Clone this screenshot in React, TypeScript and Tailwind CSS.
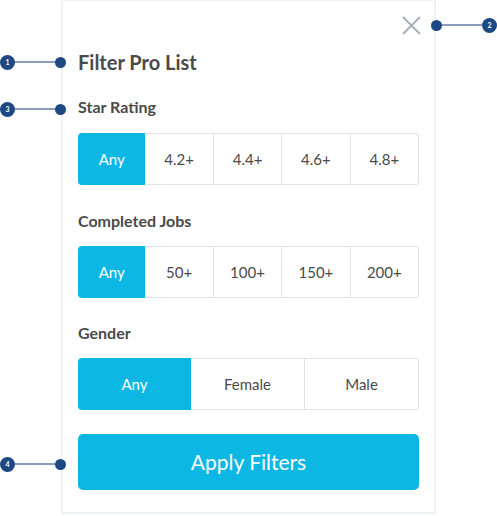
import React from 'react'

const ratings = ['Any', '4.2+', '4.4+', '4.6+', '4.8+']
const jobs = ['Any', '50+', '100+', '150+', '200+']
const genders = ['Any', 'Female', 'Male']

function Segmented({ options }: { options: string[] }) {
  return (
    <div className="flex h-[52px] w-full">
      {options.map((o, i) => (
        <div
          key={o}
          className={`flex flex-1 items-center justify-center text-[15px] ${
            i === 0
              ? 'rounded-l-[4px] bg-[#0cb8e3] text-white'
              : 'border-y border-r border-[#e3e3e3] text-[#4a4a4a]'
          } ${i === options.length - 1 ? 'rounded-r-[3px]' : ''}`}
        >
          {o}
        </div>
      ))}
    </div>
  )
}

function Marker({ n, side, top }: { n: number; side: 'left' | 'right'; top: number }) {
  return (
    <div
      className={`absolute flex h-[14px] w-[66px] items-center ${side === 'left' ? 'left-0' : 'right-0 flex-row-reverse'}`}
      style={{ top: top - 7 }}
    >
      <div className="flex h-[15px] w-[15px] shrink-0 items-center justify-center rounded-full bg-[#1e4883] text-[7px] font-bold text-white">
        {n}
      </div>
      <div className="h-[2px] flex-1 bg-[#8b9dba]" />
      <div className="h-[11px] w-[11px] shrink-0 rounded-full bg-[#1e4883]" />
    </div>
  )
}

export default function App() {
  return (
    <div className="relative h-[516px] w-[497px] bg-white" style={{ fontFamily: 'Lato, "Noto Sans", sans-serif' }}>
      <div className="flex h-full">
        <div className="w-[61px]" />
        <div className="mb-[2px] flex w-[375px] flex-col border-x-2 border-b-2 border-t border-[#eef2f6] px-[15px]">
          <div className="-mr-[2px] flex h-[40px] items-end justify-end">
            <svg width="19" height="19" viewBox="0 0 19 19" className="mb-[6px]">
              <path d="M1 1L18 18M18 1L1 18" stroke="#a7b2bc" strokeWidth="2" />
            </svg>
          </div>
          <h1 className="mt-[9px] text-[20px] font-bold leading-[24px] text-[#4a4a4a]">Filter Pro List</h1>
          <h2 className="mt-[23px] text-[16px] font-bold leading-[20px] text-[#4a4a4a]">Star Rating</h2>
          <div className="mt-[16px]">
            <Segmented options={ratings} />
          </div>
          <h2 className="mt-[26px] text-[16px] font-bold leading-[20px] text-[#4a4a4a]">Completed Jobs</h2>
          <div className="mt-[15px]">
            <Segmented options={jobs} />
          </div>
          <h2 className="mt-[25px] text-[16px] font-bold leading-[20px] text-[#4a4a4a]">Gender</h2>
          <div className="mt-[15px]">
            <Segmented options={genders} />
          </div>
          <button className="mt-[24px] flex h-[56px] w-full items-center justify-center rounded-[5px] bg-[#0cb8e3] text-[21px] text-white">
            Apply Filters
          </button>
        </div>
      </div>
      <Marker n={1} side="left" top={62} />
      <Marker n={3} side="left" top={109} />
      <Marker n={4} side="left" top={464} />
      <Marker n={2} side="right" top={25} />
    </div>
  )
}
